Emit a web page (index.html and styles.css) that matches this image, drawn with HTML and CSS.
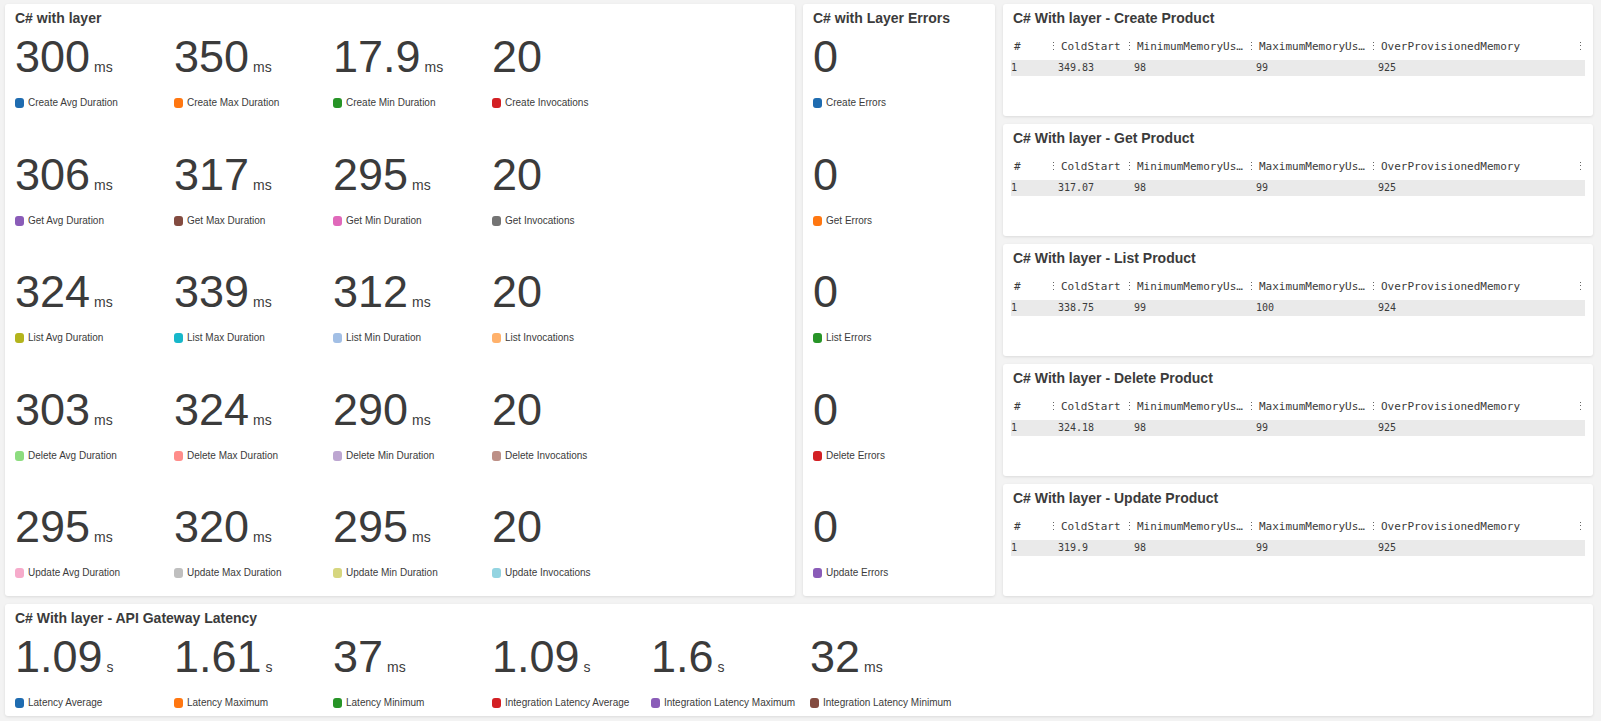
FILE: index.html
```html
<!DOCTYPE html>
<html lang="en">
<head>
<meta charset="utf-8">
<title>C# with layer</title>
<link rel="stylesheet" href="styles.css">
</head>
<body>
<main class="dashboard">
  <section class="panel">
    <h2 class="panel-title">C# with layer</h2>
    <div class="metrics metrics-four" id="durations"></div>
  </section>
  <section class="panel">
    <h2 class="panel-title">C# with Layer Errors</h2>
    <div class="metrics" id="errors"></div>
  </section>
  <div class="tables" id="tables"></div>
  <section class="panel panel-wide">
    <h2 class="panel-title">C# With layer - API Gateway Latency</h2>
    <div class="metrics metrics-six" id="latency"></div>
  </section>
</main>
<script src="app.js"></script>
</body>
</html>
```
FILE: styles.css
```css
* {
  box-sizing: border-box;
}

body {
  margin: 0;
  background: #f3f3f3;
  color: #3b3b3b;
  font-family: "Liberation Sans", Arial, sans-serif;
}

.dashboard {
  display: grid;
  grid-template-columns: 790fr 192fr 590fr;
  grid-template-rows: 1fr auto;
  gap: 8px;
  min-height: 100vh;
  padding: 4px 8px 5px 5px;
}

.panel {
  display: flex;
  flex-direction: column;
  min-width: 0;
  min-height: 112px;
  padding: 5px 10px;
  background: #fff;
  border-radius: 3px;
  box-shadow: 0 1px 3px rgba(0, 0, 0, 0.1);
}

.panel-wide {
  grid-column: 1 / -1;
}

.panel-title {
  margin: 0;
  font-size: 14px;
  line-height: 18px;
  font-weight: bold;
}

.metrics {
  display: grid;
  flex: 1;
  grid-template-columns: 159px;
  align-content: space-between;
  padding: 8px 0 11px;
}

.metrics-four {
  grid-template-columns: repeat(4, 159px);
}

.metrics-six {
  grid-template-columns: repeat(6, 159px);
  padding-bottom: 0;
}

.metric-value {
  margin: 0;
  font-size: 45px;
  line-height: 44px;
  white-space: nowrap;
}

.metric-unit {
  margin-left: 4px;
  font-size: 14px;
  line-height: 16px;
}

.metric-label {
  display: flex;
  align-items: center;
  gap: 4px;
  margin: 17px 0 0;
  font-size: 10px;
  line-height: 14px;
  white-space: nowrap;
}

.swatch {
  width: 9px;
  height: 10px;
  border-radius: 3px;
}

.tables {
  display: grid;
  grid-auto-rows: 1fr;
  gap: 8px;
  min-width: 0;
}

.log-table {
  width: calc(100% + 4px);
  margin: 9px -2px 0;
  border-collapse: collapse;
  table-layout: fixed;
  font-family: "DejaVu Sans Mono", monospace;
  text-align: left;
}

.log-table th {
  padding: 0 2px 0 3px;
  font-size: 11px;
  font-weight: normal;
}

.log-table td {
  height: 16px;
  padding: 0;
  background: #eaeaea;
  font-size: 10px;
  line-height: 16px;
}

.col-index {
  width: 47px;
}

.col-cold {
  width: 76px;
}

.col-memory {
  width: 122px;
}

.head {
  display: flex;
  align-items: center;
  justify-content: space-between;
  height: 24px;
  padding-bottom: 4px;
}

.grip {
  display: flex;
  padding: 0;
  border: 0;
  background: none;
  color: #666;
}
```
FILE: app.js
```js
const metric = ([value, unit, label, color]) => `
  <div>
    <p class="metric-value">${value}${unit ? `<span class="metric-unit">${unit}</span>` : ''}</p>
    <p class="metric-label"><span class="swatch" style="background:${color}"></span>${label}</p>
  </div>`;

const fill = (id, items) => {
  document.getElementById(id).innerHTML = items.map(metric).join('');
};

fill('durations', [
  ['300', 'ms', 'Create Avg Duration', '#1f6cb0'],
  ['350', 'ms', 'Create Max Duration', '#ff7711'],
  ['17.9', 'ms', 'Create Min Duration', '#279427'],
  ['20', '', 'Create Invocations', '#d32024'],
  ['306', 'ms', 'Get Avg Duration', '#8a5cb8'],
  ['317', 'ms', 'Get Max Duration', '#834b40'],
  ['295', 'ms', 'Get Min Duration', '#e069ba'],
  ['20', '', 'Get Invocations', '#747474'],
  ['324', 'ms', 'List Avg Duration', '#b3b41d'],
  ['339', 'ms', 'List Max Duration', '#17b7ca'],
  ['312', 'ms', 'List Min Duration', '#a2bfe5'],
  ['20', '', 'List Invocations', '#ffb16b'],
  ['303', 'ms', 'Delete Avg Duration', '#8ddc7f'],
  ['324', 'ms', 'Delete Max Duration', '#ff8d8a'],
  ['290', 'ms', 'Delete Min Duration', '#bda6d1'],
  ['20', '', 'Delete Invocations', '#bd9087'],
  ['295', 'ms', 'Update Avg Duration', '#f6abcb'],
  ['320', 'ms', 'Update Max Duration', '#bfbfbf'],
  ['295', 'ms', 'Update Min Duration', '#d6d67f'],
  ['20', '', 'Update Invocations', '#93d4e1'],
]);

fill('errors', [
  ['0', '', 'Create Errors', '#1f6cb0'],
  ['0', '', 'Get Errors', '#ff7711'],
  ['0', '', 'List Errors', '#279427'],
  ['0', '', 'Delete Errors', '#d32024'],
  ['0', '', 'Update Errors', '#8a5cb8'],
]);

fill('latency', [
  ['1.09', 's', 'Latency Average', '#1f6cb0'],
  ['1.61', 's', 'Latency Maximum', '#ff7711'],
  ['37', 'ms', 'Latency Minimum', '#279427'],
  ['1.09', 's', 'Integration Latency Average', '#d32024'],
  ['1.6', 's', 'Integration Latency Maximum', '#8a5cb8'],
  ['32', 'ms', 'Integration Latency Minimum', '#834b40'],
]);

const columns = [
  ['#', 'col-index'],
  ['ColdStart', 'col-cold'],
  ['MinimumMemoryUs…', 'col-memory'],
  ['MaximumMemoryUs…', 'col-memory'],
  ['OverProvisionedMemory', ''],
];

const heading = ([name, cls]) => `
  <th scope="col" class="${cls}"><div class="head"><span>${name}</span>
    <button class="grip" type="button" aria-label="Resize ${name}">
      <svg width="5" height="10" viewBox="0 0 5 10" fill="currentColor"><path d="M2 1h1v1h-1zM2 4h1v1h-1zM2 8h1v1h-1z"/></svg>
    </button></div></th>`;

document.getElementById('tables').innerHTML = [
  ['Create', ['1', '349.83', '98', '99', '925']],
  ['Get', ['1', '317.07', '98', '99', '925']],
  ['List', ['1', '338.75', '99', '100', '924']],
  ['Delete', ['1', '324.18', '98', '99', '925']],
  ['Update', ['1', '319.9', '98', '99', '925']],
].map(([name, cells]) => `
  <section class="panel">
    <h2 class="panel-title">C# With layer - ${name} Product</h2>
    <table class="log-table">
      <thead><tr>${columns.map(heading).join('')}</tr></thead>
      <tbody><tr>${cells.map((c) => `<td>${c}</td>`).join('')}</tr></tbody>
    </table>
  </section>`).join('');
```
